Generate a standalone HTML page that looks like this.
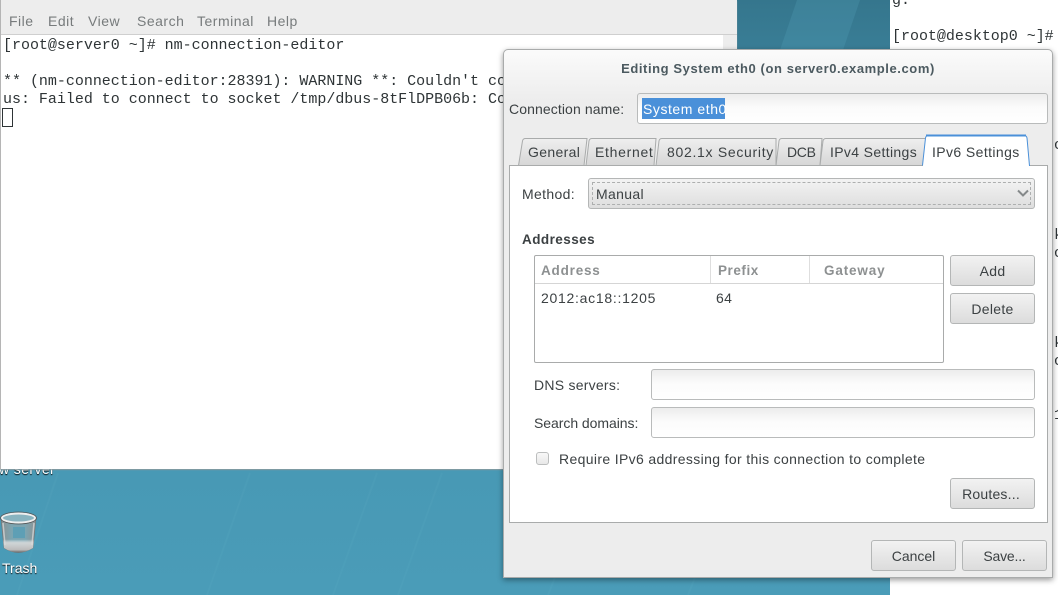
<!DOCTYPE html>
<html><head><meta charset="utf-8"><style>
html,body{margin:0;padding:0}
body{width:1058px;height:595px;overflow:hidden;position:relative;background:#fff;font-family:"Liberation Sans",sans-serif}
.a{position:absolute;white-space:pre}
.m{font-family:"Liberation Mono",monospace;font-size:15px;line-height:18px;color:#2e3436;letter-spacing:-.02px}
.t{font-family:"Liberation Sans",sans-serif;font-size:14px;line-height:18px;color:#3c4143;letter-spacing:.35px}
.mn{color:#777b7c;letter-spacing:.5px}
.h{font-weight:bold;color:#8d9091;font-size:13.5px}
.btn{position:absolute;box-sizing:border-box;border:1px solid #b4b6b6;border-radius:3px;background:linear-gradient(#f2f2f2,#dcdcdc);font-family:"Liberation Sans",sans-serif;font-size:14px;letter-spacing:.3px;color:#3c4143;text-align:center;height:31px;line-height:31px}
.inp{position:absolute;box-sizing:border-box;border:1px solid #b9bbbb;border-radius:3px;background:linear-gradient(#ececec,#fbfbfb 45%,#fff);height:31px}
</style></head><body>
<div class="a" style="left:0;top:0;width:890px;height:595px;background:linear-gradient(#35768d 0,#3f88a2 120px,#4797b3 400px,#4a9cb8 595px)"></div>
<svg class="a" style="left:0;top:0" width="890" height="595">
<path d="M797 0H860L843 50H780Z" fill="#5fb0c8" fill-opacity=".2"/>
<g stroke="#7fc0d4" stroke-opacity=".07" stroke-width="2" fill="none"><path d="M58 473L17 595M250 473L207 595M377 473L333 595M442 473L398 595M560 565L548 595M700 565L688 595"/></g></svg>
<div class="a" style="left:890px;top:0;width:168px;height:595px;background:#fff"></div>
<div class="a m" style="left:892px;top:-8px">g.</div>
<div class="a m" style="left:892px;top:28px">[root@desktop0 ~]#</div>
<div class="a m" style="left:1054px;top:137px">c</div>
<div class="a m" style="left:1054px;top:227px">k</div>
<div class="a m" style="left:1054px;top:245px">c</div>
<div class="a m" style="left:1054px;top:335px">k</div>
<div class="a m" style="left:1054px;top:353px">c</div>
<div class="a m" style="left:1054px;top:407px">1</div>

<div class="a" style="left:-1px;top:460px;color:#fff;font:14px/18px 'Liberation Sans',sans-serif;text-shadow:0 1px 1px #000;letter-spacing:.4px">w server</div>

<div class="a" style="left:0;top:0;width:737px;height:469px;background:#fff;box-shadow:0 1px 1px #8a9a9f"></div>
<div class="a" style="left:0;top:0;width:737px;height:34px;background:#ededed;border-bottom:1px solid #cfcfcf"></div>
<div class="a" style="left:0;top:0;width:1px;height:469px;background:#b5b5b5"></div>
<div class="a" style="left:723px;top:35px;width:14px;height:434px;background:#ededed"></div>
<div class="a t mn" style="left:9px;top:12px">File</div>
<div class="a t mn" style="left:48px;top:12px">Edit</div>
<div class="a t mn" style="left:88px;top:12px">View</div>
<div class="a t mn" style="left:137px;top:12px">Search</div>
<div class="a t mn" style="left:197px;top:12px">Terminal</div>
<div class="a t mn" style="left:267px;top:12px">Help</div>
<div class="a m" style="left:3px;top:37px">[root@server0 ~]# nm-connection-editor</div>
<div class="a m" style="left:3px;top:73px">** (nm-connection-editor:28391): WARNING **: Couldn't co</div>
<div class="a m" style="left:3px;top:91px">us: Failed to connect to socket /tmp/dbus-8tFlDPB06b: Co</div>
<div class="a" style="left:2px;top:108px;width:9px;height:17px;border:1px solid #2e3436"></div>

<svg class="a" style="left:0;top:511px" width="38" height="45" viewBox="0 0 38 45">
<defs>
<linearGradient id="g" x1="0" x2="1" y1="0" y2="0"><stop offset="0" stop-color="#8d9192"/><stop offset=".3" stop-color="#7da5b1"/><stop offset=".7" stop-color="#7da5b1"/><stop offset="1" stop-color="#8d9192"/></linearGradient>
<linearGradient id="h" x1="0" x2="0" y1="0" y2="1"><stop offset="0" stop-color="#fff" stop-opacity="0"/><stop offset=".62" stop-color="#fff" stop-opacity="0"/><stop offset=".72" stop-color="#ddd" stop-opacity=".85"/><stop offset=".92" stop-color="#bbb"/><stop offset="1" stop-color="#666"/></linearGradient>
</defs>
<path d="M1 7L4 37Q18 46 33 37L36 7Z" fill="url(#g)" stroke="#777" stroke-width=".7"/>
<path d="M1 7L4 37Q18 46 33 37L36 7Z" fill="url(#h)"/>
<rect x="13" y="16" width="12" height="11" fill="#5e9fb5"/>
<path d="M3 12L5 34M34 12L32 34" stroke="#ddd" stroke-width="1.5" opacity=".7"/>
<ellipse cx="18.5" cy="7" rx="16.5" ry="4.5" fill="#89b4c0" stroke="#eee" stroke-width="2"/>
<ellipse cx="18.5" cy="7" rx="18" ry="6" fill="none" stroke="#555" stroke-width=".8"/>
</svg>
<div class="a" style="left:2px;top:559px;color:#fff;font:14px/18px 'Liberation Sans',sans-serif;text-shadow:0 1px 1px #111">Trash</div>

<!-- dialog -->
<div class="a" style="left:503px;top:49px;width:550px;height:529px;box-sizing:border-box;background:linear-gradient(#fbfbfb 0,#ededed 50px);border:1px solid #a9abab;border-radius:5px 5px 0 0;box-shadow:0 2px 6px rgba(0,0,0,.4)"></div>
<div class="a" style="left:504px;top:60px;width:548px;text-align:center;font:bold 13px/18px 'Liberation Sans',sans-serif;color:#4c5a60;letter-spacing:.58px">Editing System eth0 (on server0.example.com)</div>
<div class="a t" style="left:509px;top:100px;letter-spacing:.1px">Connection name:</div>
<div class="inp" style="left:637px;top:93px;width:411px"></div>
<div class="a" style="left:642px;top:98px;width:83px;height:21px;background:#4a90d9"></div>
<div class="a t" style="left:643px;top:100px;color:#fff;letter-spacing:.55px">System eth0</div>

<div class="a" style="left:509px;top:165px;width:539px;height:358px;box-sizing:border-box;border:1px solid #a9abab;background:#fff"></div>
<svg class="a" style="left:515px;top:132px" width="520" height="36">
<defs><linearGradient id="tb" x1="0" x2="0" y1="0" y2="1"><stop offset="0" stop-color="#efefef"/><stop offset="1" stop-color="#d6d6d6"/></linearGradient></defs>
<g fill="url(#tb)" stroke="#a9abab">
<path d="M3.5 33.5L7.5 9Q8 6.5 10.5 6.5H72L69 33.5Z"/>
<path d="M71 33.5L74 9Q74.5 6.5 77 6.5H141L139 33.5Z"/>
<path d="M141 33.5L144 9Q144.5 6.5 147 6.5H261L261 33.5Z"/>
<path d="M261 33.5L264 9Q264.5 6.5 267 6.5H307L305 33.5Z"/>
<path d="M305 33.5L308 9Q308.5 6.5 311 6.5H412L409 33.5Z"/>
</g>
<path d="M407.5 33.5L410.5 6Q411 3.5 413.5 3.5H509Q511.5 3.5 512 6L514.500 34" fill="#fff" stroke="#4a90d9"/>
<path d="M411 3.5H511" stroke="#4a90d9" stroke-width="2"/>
<path d="M408 34.5H514" stroke="#fff" stroke-width="2"/>
</svg>
<div class="a t" style="left:528px;top:143px">General</div>
<div class="a t" style="left:595px;top:143px;letter-spacing:.7px">Ethernet</div>
<div class="a t" style="left:667px;top:143px;letter-spacing:.7px">802.1x Security</div>
<div class="a t" style="left:787px;top:143px;letter-spacing:-.3px">DCB</div>
<div class="a t" style="left:830px;top:143px">IPv4 Settings</div>
<div class="a t" style="left:932px;top:143px;letter-spacing:.4px">IPv6 Settings</div>

<div class="a t" style="left:522px;top:185px">Method:</div>
<div class="btn" style="left:588px;top:178px;width:447px;background:linear-gradient(#f3f3f3,#dedede)"></div>
<div class="a" style="left:592px;top:182px;width:439px;height:23px;box-sizing:border-box;border:1px dashed #adafaf"></div>
<div class="a t" style="left:596px;top:185px">Manual</div>
<svg class="a" style="left:1016px;top:189px" width="14" height="10"><path d="M2 1.5L7 6.5L12 1.5" fill="none" stroke="#85898a" stroke-width="2"/></svg>

<div class="a" style="left:522px;top:231px;font:bold 13.5px/18px 'Liberation Sans',sans-serif;color:#3c4143;letter-spacing:.45px">Addresses</div>

<div class="a" style="left:534px;top:255px;width:410px;height:108px;box-sizing:border-box;border:1px solid #a9abab;border-radius:2px;background:#fff"></div>
<div class="a" style="left:535px;top:283px;width:408px;height:1px;background:#d5d5d5"></div>
<div class="a" style="left:710px;top:256px;width:1px;height:27px;background:#dedede"></div>
<div class="a" style="left:809px;top:256px;width:1px;height:27px;background:#dedede"></div>
<div class="a t h" style="left:541px;top:262px;letter-spacing:.8px">Address</div>
<div class="a t h" style="left:718px;top:262px;letter-spacing:.55px">Prefix</div>
<div class="a t h" style="left:824px;top:262px;letter-spacing:.85px">Gateway</div>
<div class="a t" style="left:541px;top:289px;letter-spacing:.72px">2012:ac18::1205</div>
<div class="a t" style="left:716px;top:289px">64</div>

<div class="btn" style="left:950px;top:255px;width:85px">Add</div>
<div class="btn" style="left:950px;top:293px;width:85px">Delete</div>

<div class="a t" style="left:534px;top:376px;letter-spacing:.25px">DNS servers:</div>
<div class="inp" style="left:651px;top:369px;width:384px"></div>
<div class="a t" style="left:534px;top:414px;letter-spacing:-.05px">Search domains:</div>
<div class="inp" style="left:651px;top:407px;width:384px"></div>

<div class="a" style="left:536px;top:452px;width:11px;height:11px;border:1px solid #bcbebe;border-radius:3px;background:linear-gradient(#f8f8f8,#e8e8e8)"></div>
<div class="a t" style="left:559px;top:450px">Require IPv6 addressing for this connection to complete</div>
<div class="btn" style="left:950px;top:478px;width:85px;padding-right:3px;letter-spacing:.2px">Routes...</div>

<div class="btn" style="left:871px;top:540px;width:85px;letter-spacing:0">Cancel</div>
<div class="btn" style="left:962px;top:540px;width:85px;letter-spacing:-.2px">Save...</div>
</body></html>
